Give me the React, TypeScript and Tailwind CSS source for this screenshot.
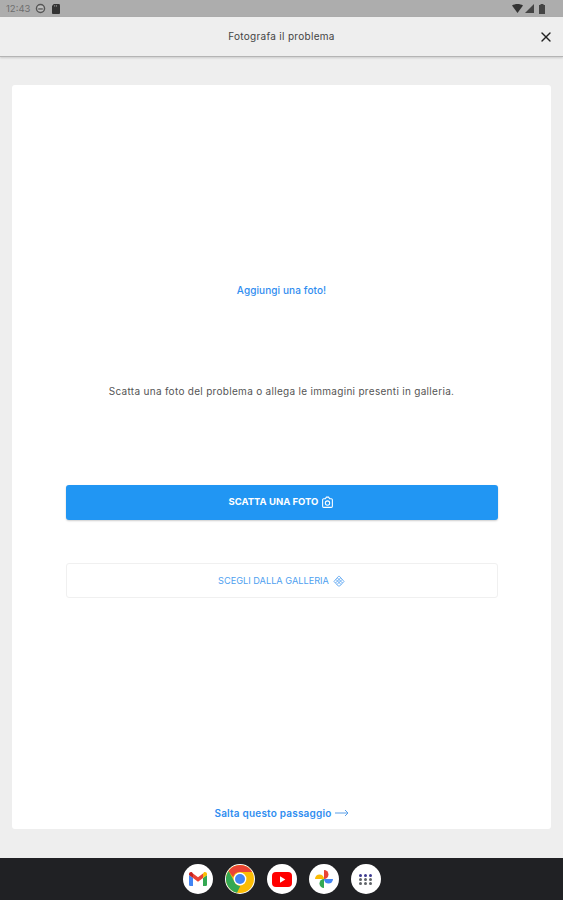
import { X } from "lucide-react";

const font = { fontFamily: "Inter, 'Liberation Sans', sans-serif" };

// Icone della barra di stato
const StatusBar = () => (
    <div className="h-[17px] bg-[#adadad] flex items-center justify-between pl-[6px] pr-[18px]">
        <div className="flex items-center gap-[5px]">
            <span className="text-[9.5px] leading-none text-[#6e6e6e]">12:43</span>
            <svg className="w-[11px] h-[11px]" viewBox="0 0 12 12">
                <circle cx="6" cy="6" r="4.4" fill="#bdbdbd" stroke="#555" strokeWidth="1.6" />
                <path d="M3.5 6.5h5" stroke="#555" strokeWidth="1.4" />
            </svg>
            <svg className="w-[8px] h-[10px] ml-[1px]" viewBox="0 0 9 11">
                <path d="M2 0h5.5A1.5 1.5 0 0 1 9 1.5V10a1 1 0 0 1-1 1H1a1 1 0 0 1-1-1V2z" fill="#333" />
                <path d="M3 1v2M5 1v2" stroke="#adadad" strokeWidth="0.7" />
            </svg>
        </div>
        <div className="flex items-center gap-[2px]">
            <svg className="w-[11px] h-[9px]" viewBox="0 0 11 9">
                <path d="M0 1.5C3-.5 8-.5 11 1.5L5.5 9z" fill="#333" />
            </svg>
            <svg className="w-[9px] h-[9px]" viewBox="0 0 9 9">
                <path d="M9 0v9H0z" fill="#444" />
            </svg>
            <svg className="w-[6px] h-[10px] ml-[3px]" viewBox="0 0 6 10">
                <path d="M1.5 1V0h3v1H6v9H0V1z" fill="#444" />
            </svg>
        </div>
    </div>
);

const Gmail = () => (
    <svg className="w-[18px] h-[14px]" viewBox="0 0 18 14">
        <path d="M1.2 14A1.2 1.2 0 0 1 0 12.8V3l4 3v8z" fill="#4285f4" />
        <path d="M14 14V6l4-3v9.800A1.200 1.200 0 0 1 16.800 14z" fill="#34a853" />
        <path d="M14 1.500 9 5.300 4 1.500V6l5 3.800L14 6z" fill="#ea4335" />
        <path d="M0 3V2c0-1.700 2-2.600 3.200-1.500L4 1.500V6z" fill="#c5221f" />
        <path d="M18 3V2c0-1.700-2-2.600-3.200-1.500L14 1.500V6z" fill="#fbbc04" />
    </svg>
);

const Chrome = () => (
    <svg className="w-[28px] h-[28px]" viewBox="0 0 28 28">
        <circle cx="14" cy="14" r="14" fill="#fbbc04" />
        <path d="M14 0a14 14 0 0 1 12.100 7H14a7 7 0 0 0-6.800 5.300L2.500 6A14 14 0 0 1 14 0z" fill="#ea4335" />
        <path d="M2.500 6l5.800 10.500a7 7 0 0 0 6 4.500L11 27.700A14 14 0 0 1 2.500 6z" fill="#34a853" />
        <circle cx="14" cy="14" r="6.400" fill="#fff" />
        <circle cx="14" cy="14" r="5" fill="#4285f4" />
    </svg>
);

const Youtube = () => (
    <svg className="w-[20px] h-[15px]" viewBox="0 0 20 15">
        <rect width="20" height="15" rx="4" fill="#f00" />
        <path d="M8 4.300v6.400l5.300-3.200z" fill="#fff" />
    </svg>
);

const Photos = () => (
    <svg className="w-[20px] h-[20px]" viewBox="0 0 20 20">
        <path d="M10 10V1a4.500 4.500 0 0 1 0 9z" fill="#ea4335" />
        <path d="M10 10h9a4.500 4.500 0 0 1-9 0z" fill="#4285f4" />
        <path d="M10 10v9a4.500 4.500 0 0 1 0-9z" fill="#34a853" />
        <path d="M10 10H1a4.500 4.500 0 0 1 9 0z" fill="#fbbc04" />
    </svg>
);

const Launcher = () => (
    <div className="grid grid-cols-3 gap-x-[2px] gap-y-[1px]">
        {[0, 1, 2, 3, 4, 5, 6, 7, 8].map((i) => (
            <span key={i} className={i < 3 ? "w-[3px] h-[3px] rounded-full bg-[#3c3a8f]" : "w-[3px] h-[3px] rounded-full bg-[#5f6368]"} />
        ))}
    </div>
);

const DockItem = ({ children }: { children: React.ReactNode }) => (
    <div className="w-[30px] h-[30px] rounded-full bg-white flex items-center justify-center">
        {children}
    </div>
);

export default function App() {
    return (
        <div className="w-[563px] h-[900px] flex flex-col bg-[#eeeeee] overflow-hidden" style={font}>
            <StatusBar />

            <div className="h-[40px] bg-[#eeeeee] flex items-center justify-center relative border-b border-[#b4b4b4] shadow-[0_1px_2px_rgba(0,0,0,0.15)]">
                <span className="text-[10px] tracking-[0.3px] text-[#444]">Fotografa il problema</span>
                <X className="absolute right-[9px] top-[12px] w-[16px] h-[16px] text-[#222]" strokeWidth={2} />
            </div>

            <div className="flex-1 px-[12px] pt-[28px] pb-[29px]">
                <div className="h-full bg-white rounded-[3px] flex flex-col items-center">
                    <p className="mt-[198px] text-[10px] leading-[14px] tracking-[0.1px] font-medium text-[#2f8df0]">Aggiungi una foto!</p>
                    <p className="mt-[87px] text-[10px] leading-[14px] tracking-[0.3px] text-[#555]">
                        Scatta una foto del problema o allega le immagini presenti in galleria.
                    </p>

                    <button className="mt-[87px] w-[432px] h-[35px] rounded-[3px] bg-[#2196f3] shadow-[0_1px_2px_rgba(0,0,0,0.2)] flex items-center justify-center gap-[3px] text-white text-[9.5px] font-bold">
                        SCATTA UNA FOTO
                        <svg className="w-[13px] h-[13px]" viewBox="0 0 12 12" fill="none" stroke="#fff" strokeWidth="1">
                            <path d="M1.500 3.500a1 1 0 0 1 1-1h1.500L5 1h2l1 1.500h1.500a1 1 0 0 1 1 1v6a1 1 0 0 1-1 1h-7a1 1 0 0 1-1-1z" />
                            <circle cx="6" cy="6.500" r="2" />
                        </svg>
                    </button>

                    <button className="mt-[43px] w-[432px] h-[35px] rounded-[3px] bg-white border border-[#f0f0f0] flex items-center justify-center gap-[4px] text-[#4f9ff0] text-[9.2px]">
                        SCEGLI DALLA GALLERIA
                        <svg className="w-[12px] h-[12px]" viewBox="0 0 12 12" fill="none" stroke="#5ea6f0" strokeWidth="0.9">
                            <path d="M1 6.500l4.300-5a1 1 0 0 1 1.400 0l4.300 5-4.300 4.500a1 1 0 0 1-1.400 0z" />
                            <path d="M3 4.500l5 5M4.500 3l5 5M9 4.500l-5 5M7.500 3l-5 5" />
                        </svg>
                    </button>

                    <div className="mt-auto mb-[9px] flex items-center gap-[3px] text-[10px] leading-[14px] tracking-[0.2px] font-semibold text-[#2f8df0]">
                        Salta questo passaggio
                        <svg className="w-[14px] h-[8px]" viewBox="0 0 14 8" fill="none" stroke="#5a9fe8" strokeWidth="1">
                            <path d="M0 4h13M10 1l3 3-3 3" />
                        </svg>
                    </div>
                </div>
            </div>

            <div className="h-[42px] bg-[#202124] flex items-center justify-center gap-[12px]">
                <DockItem><Gmail /></DockItem>
                <DockItem><Chrome /></DockItem>
                <DockItem><Youtube /></DockItem>
                <DockItem><Photos /></DockItem>
                <DockItem><Launcher /></DockItem>
            </div>
        </div>
    );
}
